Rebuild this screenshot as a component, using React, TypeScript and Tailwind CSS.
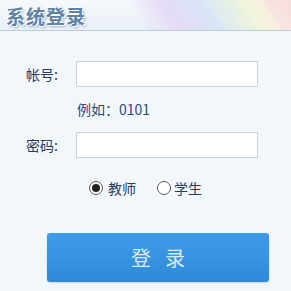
import React from "react";

const cjk = "font-['Microsoft_YaHei','Noto_Sans_CJK_SC',sans-serif]";

export default function App() {
	const [role, setRole] = React.useState("teacher");

	return (
		<div className={`w-[291px] h-[291px] overflow-hidden bg-[#f2f7fc] flex flex-col ${cjk}`}>
			<div className="relative h-[31px] shrink-0 border-b border-[#b9cde0] bg-gradient-to-b from-[#f6f9fc] to-[#e8eff7] overflow-hidden">
				<div className="absolute left-[135px] top-[-10px] w-[35px] h-[50px] skew-x-[35deg] bg-gradient-to-r from-transparent to-[#e6d9f6]" />
				<div className="absolute left-[170px] top-[-10px] w-[45px] h-[50px] skew-x-[35deg] bg-gradient-to-r from-[#e3dcf5] to-[#d8e6f6]" />
				<div className="absolute left-[215px] top-[-10px] w-[35px] h-[50px] skew-x-[35deg] bg-gradient-to-r from-[#dde9f2] to-[#edf5dc]" />
				<div className="absolute left-[250px] top-[-10px] w-[22px] h-[50px] skew-x-[35deg] bg-gradient-to-r from-[#f1f5dc] to-[#f8efdf]" />
				<div className="absolute left-[272px] top-[-10px] w-[30px] h-[50px] skew-x-[35deg] bg-gradient-to-r from-[#f8e6e2] to-[#f7dcdc]" />
				<p className="relative pl-[6px] pt-[5px] text-[19px] leading-[21px] font-bold tracking-[1px] text-[#5f82a8] [text-shadow:1px_1px_0_#fff,-1px_-1px_0_#fff,1px_-1px_0_#dfe8f2,2px_2px_2px_#9fb3c8]">系统登录</p>
			</div>

			<div className="flex flex-col pt-[30px]">
				<div className="flex items-center h-[26px]">
					<span className="w-[76px] pl-[26px] text-[14px] text-[#2a3a62]">帐号:</span>
					<input className="w-[182px] h-[26px] bg-white border border-[#c9d2dc] outline-none" />
				</div>
				<p className="pl-[77px] mt-[14px] h-[16px] text-[14px] leading-[16px] text-[#2c4a7a]">例如：0101</p>
				<div className="flex items-center h-[26px] mt-[15px]">
					<span className="w-[76px] pl-[26px] text-[14px] text-[#2a3a62]">密码:</span>
					<input type="password" className="w-[182px] h-[26px] bg-white border border-[#c9d2dc] outline-none" />
				</div>

				<div className="flex items-center mt-[21px] pl-[89px] h-[18px] text-[14px] text-[#2a3a62]">
					<label className="flex items-center gap-[5px] cursor-pointer" onClick={() => setRole("teacher")}>
						<span className="w-[14px] h-[14px] rounded-full border border-[#555] bg-white flex items-center justify-center">
							{role === "teacher" ? <span className="w-[8px] h-[8px] rounded-full bg-[#222]" /> : null}
						</span>
						<span>教师</span>
					</label>
					<label className="flex items-center gap-[3px] ml-[21px] cursor-pointer" onClick={() => setRole("student")}>
						<span className="w-[14px] h-[14px] rounded-full border border-[#555] bg-white flex items-center justify-center">
							{role === "student" ? <span className="w-[8px] h-[8px] rounded-full bg-[#222]" /> : null}
						</span>
						<span>学生</span>
					</label>
				</div>

				<div className="pl-[47px] mt-[36px]">
					<button type="button" className="w-[222px] h-[49px] rounded-[3px] bg-gradient-to-b from-[#3d9cea] to-[#2f8bd6] text-[20px] tracking-[14px] pl-[14px] text-[#d9ecfa] shadow-[0_1px_2px_rgba(0,0,0,0.15)]">登录</button>
				</div>
			</div>
		</div>
	);
}
